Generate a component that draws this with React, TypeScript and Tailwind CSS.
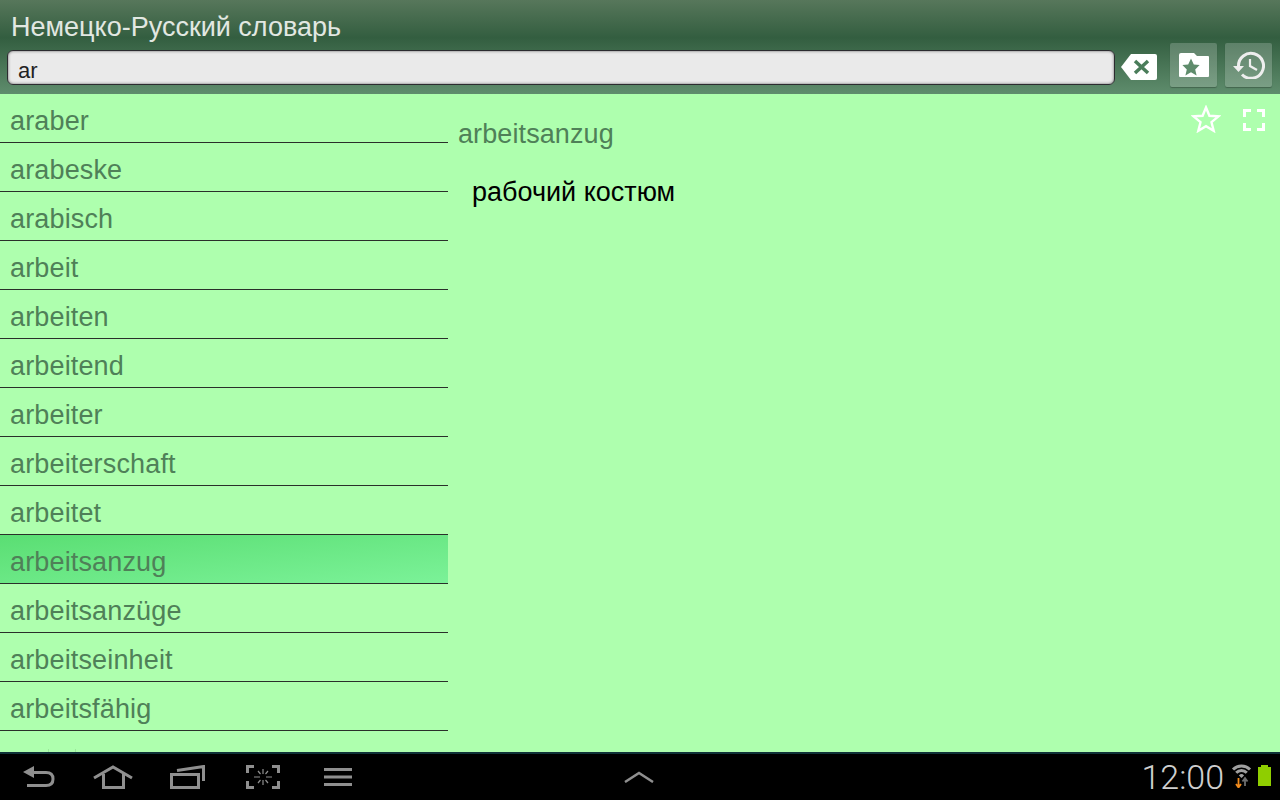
import React from 'react';

const words = [
  'araber', 'arabeske', 'arabisch', 'arbeit', 'arbeiten', 'arbeitend', 'arbeiter',
  'arbeiterschaft', 'arbeitet', 'arbeitsanzug', 'arbeitsanzüge', 'arbeitseinheit', 'arbeitsfähig',
];

const ClearIcon = () => (
  <svg width="36" height="27" viewBox="0 0 36 27">
    <path d="M0 14 L10 1 H34 Q36 1 36 3 V25 Q36 27 34 27 H10 Z" fill="#fff" />
    <path d="M14 8 L27 20 M27 8 L14 20" stroke="#4a7d5a" strokeWidth="3.5" />
  </svg>
);

const FolderStar = () => (
  <svg width="30" height="24" viewBox="0 0 30 24">
    <path d="M0 2 Q0 0 2 0 H15 L18 3 H29 Q30 3 30 4 V23 Q30 24 29 24 H1 Q0 24 0 23 Z" fill="#fff" />
    <path d="M12 5.5 L14.8 11.6 L20.6 12 L16.2 16.4 L17.6 22.4 L12 19.2 L6.4 22.4 L7.8 16.4 L3.4 12 L9.2 11.6 Z" fill="#5f8c6c" />
  </svg>
);

const HistoryIcon = () => (
  <svg width="32" height="28" viewBox="0 0 32 28">
    <path d="M5.5 15 A12.5 12.5 0 1 1 9 23.5" fill="none" stroke="#eee" strokeWidth="3" />
    <path d="M0 15 H11 L5.5 21 Z" fill="#eee" />
    <path d="M17 8 V15 L24 19" fill="none" stroke="#eee" strokeWidth="2.2" />
  </svg>
);

const Star = () => (
  <svg width="30" height="28" viewBox="0 0 30 28">
    <path d="M15 2.5 L18.4 10.8 L27.4 11.4 L20.5 17.2 L22.7 25.8 L15 21.2 L7.3 25.8 L9.5 17.2 L2.6 11.4 L11.6 10.8 Z" fill="none" stroke="#fff" strokeWidth="2.4" />
  </svg>
);

const Fullscreen = () => (
  <svg width="22" height="22" viewBox="0 0 22 22">
    <path d="M1.5 8 V1.5 H8 M14 1.5 H20.5 V8 M20.5 14 V20.5 H14 M8 20.5 H1.5 V14" fill="none" stroke="#fff" strokeWidth="3" />
  </svg>
);

const BackIcon = () => (
  <svg width="32" height="22" viewBox="0 0 32 22" className="text-[#8f8f8f]">
    <path d="M0 6 L11 0 V12 Z" fill="currentColor" />
    <path d="M9 6.5 H23 Q30 6.5 30 13 Q30 19.5 23 19.5 H4" fill="none" stroke="currentColor" strokeWidth="3" />
  </svg>
);

const HomeIcon = () => (
  <svg width="40" height="24" viewBox="0 0 40 24">
    <path d="M1 13 L20 2 L39 13" fill="none" stroke="#8f8f8f" strokeWidth="3" />
    <path d="M10.5 9 V22.5 H30.5 V9" fill="none" stroke="#8f8f8f" strokeWidth="3" />
  </svg>
);

const RecentIcon = () => (
  <svg width="36" height="24" viewBox="0 0 36 24">
    <rect x="1.5" y="9.5" width="27" height="13" fill="none" stroke="#8f8f8f" strokeWidth="3" />
    <path d="M7 5.5 L33.5 1.5 V16" fill="none" stroke="#8f8f8f" strokeWidth="3" />
  </svg>
);

const ShotIcon = () => (
  <svg width="34" height="24" viewBox="0 0 34 24">
    <path d="M8 1.5 H1.5 V8 M26 1.5 H32.5 V8 M32.5 16 V22.5 H26 M8 22.5 H1.5 V16" fill="none" stroke="#8f8f8f" strokeWidth="3" />
    <path d="M17 4 V9 M17 15 V20 M8 12 H14 M20 12 H26 M12 6 L14.5 9 M22 6 L19.5 9 M12 18 L14.5 15 M22 18 L19.5 15" fill="none" stroke="#8f8f8f" strokeWidth="1.2" />
  </svg>
);

const MenuIcon = () => (
  <svg width="28" height="18" viewBox="0 0 28 18">
    <path d="M0 1.5 H28 M0 9 H28 M0 16.5 H28" stroke="#8f8f8f" strokeWidth="3" />
  </svg>
);

const WifiIcon = () => (
  <svg width="23" height="24" viewBox="0 0 23 24">
    <path d="M3 5.5 A12 12 0 0 1 20 5.5" fill="none" stroke="#a0a0a0" strokeWidth="3" />
    <path d="M6.2 8.7 A7.5 7.5 0 0 1 16.8 8.7" fill="none" stroke="#a0a0a0" strokeWidth="3" />
    <path d="M8.9 11.4 A3.7 3.7 0 0 1 14.1 11.4 L11.5 14 Z" fill="#a0a0a0" />
    <path d="M8.5 14 V23 M6 20 L8.5 23.5 L11 20" fill="none" stroke="#f08a1c" strokeWidth="1.8" />
    <path d="M15 22 V14.5 M12.5 17.5 L15 14 L17.5 17.5" fill="none" stroke="#6f6f6f" strokeWidth="1.8" />
  </svg>
);

const App: React.FC = () => {
  return (
    <div className="w-[1280px] h-[800px] flex flex-col overflow-hidden bg-[#aeffae] font-['Liberation_Sans',sans-serif]">
      {/* action bar */}
      <div className="h-[94px] shrink-0 flex flex-col bg-gradient-to-b from-[#57775b] via-[#335e40] via-40% to-[#5f8d6d]">
        <div className="h-[43px] shrink-0 pl-[11px] pt-[11px] text-[27px] leading-[32px] text-[#e2e8e2]">
          Немецко-Русский словарь
        </div>
        <div className="flex items-start pl-[7px]">
          <div className="w-[1108px] h-[35px] mt-[7px] shrink-0 rounded-[6px] border border-[#2c2c30] bg-[#eaeaea] shadow-[inset_0_0_3px_#666] pl-[10px] text-[22px] leading-[40px] text-[#222]">
            ar
          </div>
          <div className="ml-[6px] mt-[10px] shrink-0 flex"><ClearIcon /></div>
          <div className="ml-[13px] w-[47px] h-[44px] shrink-0 flex items-center justify-center rounded-[2px] bg-white/20 shadow-[0_1px_1px_rgba(0,0,0,0.25)]">
            <FolderStar />
          </div>
          <div className="ml-[8px] w-[47px] h-[44px] shrink-0 flex items-center justify-center rounded-[2px] bg-white/20 shadow-[0_1px_1px_rgba(0,0,0,0.25)]">
            <HistoryIcon />
          </div>
        </div>
      </div>

      {/* content */}
      <div className="flex-1 flex min-h-0">
        <div className="relative w-[448px] shrink-0 overflow-hidden">
          {words.map((w) => (
            <div
              key={w}
              className={`h-[49px] pl-[10px] border-b border-[#2a2f2a] text-[27px] tracking-[0.15px] leading-[54px] text-[#4f8058] ${
                w === 'arbeitsanzug' ? 'bg-gradient-to-br from-[#5ade73] to-[#7bf298] -mt-px h-[50px] border-t' : ''
              }`}
            >
              {w}
            </div>
          ))}
          {/* tops of the next row, almost gone under the fading edge */}
          <div className="absolute left-[48px] bottom-0 w-px h-[3px] bg-[#9ae89a]" />
          <div className="absolute left-[75px] bottom-0 w-px h-[3px] bg-[#9ae89a]" />
        </div>

        <div className="flex-1 min-w-0 relative pl-[10px]">
          <div className="pt-[24px] text-[27px] tracking-[0.1px] leading-[32px] text-[#4f8058]">arbeitsanzug</div>
          <div className="pl-[14px] pt-[26px] text-[27px] leading-[32px] text-black">рабочий костюм</div>
          <div className="absolute top-[11px] left-[743px]"><Star /></div>
          <div className="absolute top-[15px] left-[795px]"><Fullscreen /></div>
        </div>
      </div>

      {/* system bar */}
      <div className="h-[48px] shrink-0 bg-black border-t-2 border-[#0f3238] flex items-center relative">
        <div className="flex items-center pl-[23px]">
          <BackIcon />
          <div className="ml-[38px]"><HomeIcon /></div>
          <div className="ml-[37px]"><RecentIcon /></div>
          <div className="ml-[40px]"><ShotIcon /></div>
          <div className="ml-[44px]"><MenuIcon /></div>
        </div>
        <svg width="30" height="12" viewBox="0 0 30 12" className="ml-[272px]">
          <path d="M1 11 L15 2 L29 11" fill="none" stroke="#8f8f8f" strokeWidth="2.5" />
        </svg>
        <div className="ml-auto flex items-center pr-[9px]">
          <span className="text-[34px] leading-[40px] text-[#cfcfcf] font-['Roboto',sans-serif] font-light">12:00</span>
          <div className="ml-[6px] mb-[2px] flex"><WifiIcon /></div>
          <div className="ml-[5px] mb-[1px] relative w-[13px] h-[19px] bg-[#8fce00] before:content-[''] before:absolute before:-top-[2px] before:left-[3px] before:w-[7px] before:h-[2px] before:bg-[#8fce00]" />
        </div>
      </div>
    </div>
  );
};

export default App;
